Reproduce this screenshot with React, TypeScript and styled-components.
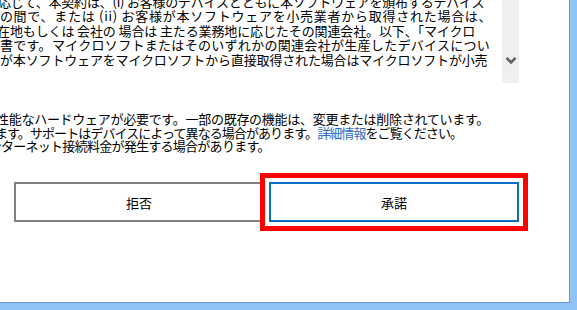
import React from "react";
import styled, { createGlobalStyle } from "styled-components";

const GlobalStyle = createGlobalStyle`
  html, body { margin: 0; padding: 0; background: #ffffff; }
  * { box-sizing: border-box; }
`;

const FONT = `"Noto Sans CJK JP", "Noto Sans", sans-serif`;

const Frame = styled.div`
  width: 577px;
  height: 310px;
  padding: 0 7px 7px 0;
  background: #8fc3f5;
  display: flex;
`;

const Panel = styled.main`
  flex: 1;
  display: flex;
  flex-direction: column;
  background: #ffffff;
  border-right: 1px solid #6b9bd3;
  border-bottom: 1px solid #6b9bd3;
  overflow: hidden;
  font-family: ${FONT};
  color: #000000;
`;

const LicenseBox = styled.section`
  display: flex;
  width: 519px;
  height: 83px;
  flex-shrink: 0;
  overflow: hidden;
`;

const LicenseText = styled.div`
  flex: 1;
  min-width: 0;
  overflow: hidden;
  margin-top: -5px;
  font-size: 13px;
  line-height: 14.4px;
`;

const ScrollTrack = styled.div`
  width: 17px;
  background: #efefef;
  display: flex;
  flex-direction: column;
  justify-content: flex-end;
  align-items: center;
  padding-bottom: 18px;
`;

const Notice = styled.section`
  margin-top: 29px;
  font-size: 13px;
  line-height: 13.7px;
  flex-shrink: 0;
`;

const Line = styled.div<{ $offset: number; $track: number }>`
  white-space: nowrap;
  margin-left: ${(p) => p.$offset}px;
  letter-spacing: ${(p) => p.$track}px;
`;

const Link = styled.span`
  color: #2b6cc0;
`;

const ButtonRow = styled.div`
  display: flex;
  gap: 5px;
  margin-top: 29px;
  padding-left: 14px;
`;

const Button = styled.button<{ $primary?: boolean }>`
  width: 250px;
  height: 40px;
  padding: 0;
  display: flex;
  align-items: center;
  justify-content: center;
  background: #ffffff;
  border: 2px solid ${(p) => (p.$primary ? "#0a6fc2" : "#808080")};
  font-family: ${FONT};
  font-size: 13px;
  color: #000000;
  outline: ${(p) => (p.$primary ? "5px solid #ff0000" : "none")};
  outline-offset: 4px;
`;

type LineData = { lead?: string; text: React.ReactNode; x: number; s: number };

const offsetOf = (l: LineData) => l.x - (l.lead ? 13 + l.s : 0);

const licenseLines: LineData[] = [
  { lead: "に", text: "応じて、本契約は、(i) お客様のデバイスとともに本ソフトウェアを頒布するデバイス", x: -2, s: -0.21 },
  { lead: "と", text: "の間で、または (ii) お客様が本ソフトウェアを小売業者から取得された場合は、", x: 0, s: 0.73 },
  { lead: "所", text: "在地もしくは 会社の 場合は 主たる業務地に応じたその関連会社。以下、「マイクロ", x: -3, s: -0.12 },
  { lead: "約", text: "書です。マイクロソフトまたはそのいずれかの関連会社が生産したデバイスについ", x: 0, s: 0.3 },
  { lead: "様", text: "が本ソフトウェアをマイクロソフトから直接取得された場合はマイクロソフトが小売", x: 0, s: -0.16 },
];

const noticeLines: LineData[] = [
  { text: "性能なハードウェアが必要です。一部の既存の機能は、変更または削除されています。", x: -4, s: -0.28 },
  {
    text: (
      <>
        ます。サポートはデバイスによって異なる場合があります。<Link>詳細情報</Link>をご覧ください。
      </>
    ),
    x: -5,
    s: -0.92,
  },
  { lead: "ン", text: "ターネット接続料金が発生する場合があります。", x: 1, s: -0.73 },
];

const renderLines = (lines: LineData[]) =>
  lines.map((l, i) => (
    <Line key={i} $offset={offsetOf(l)} $track={l.s}>
      {l.lead}
      {l.text}
    </Line>
  ));

const Chevron = () => (
  <svg width="12" height="9" viewBox="0 0 12 9" aria-hidden="true">
    <polyline points="1.5,1.8 6,6.3 10.5,1.8" fill="none" stroke="#5f5f5f" strokeWidth="2.6" />
  </svg>
);

export default function App() {
  return (
    <>
      <GlobalStyle />
      <Frame>
        <Panel>
          <LicenseBox>
            <LicenseText>{renderLines(licenseLines)}</LicenseText>
            <ScrollTrack>
              <Chevron />
            </ScrollTrack>
          </LicenseBox>
          <Notice>{renderLines(noticeLines)}</Notice>
          <ButtonRow>
            <Button>拒否</Button>
            <Button $primary>承諾</Button>
          </ButtonRow>
        </Panel>
      </Frame>
    </>
  );
}
